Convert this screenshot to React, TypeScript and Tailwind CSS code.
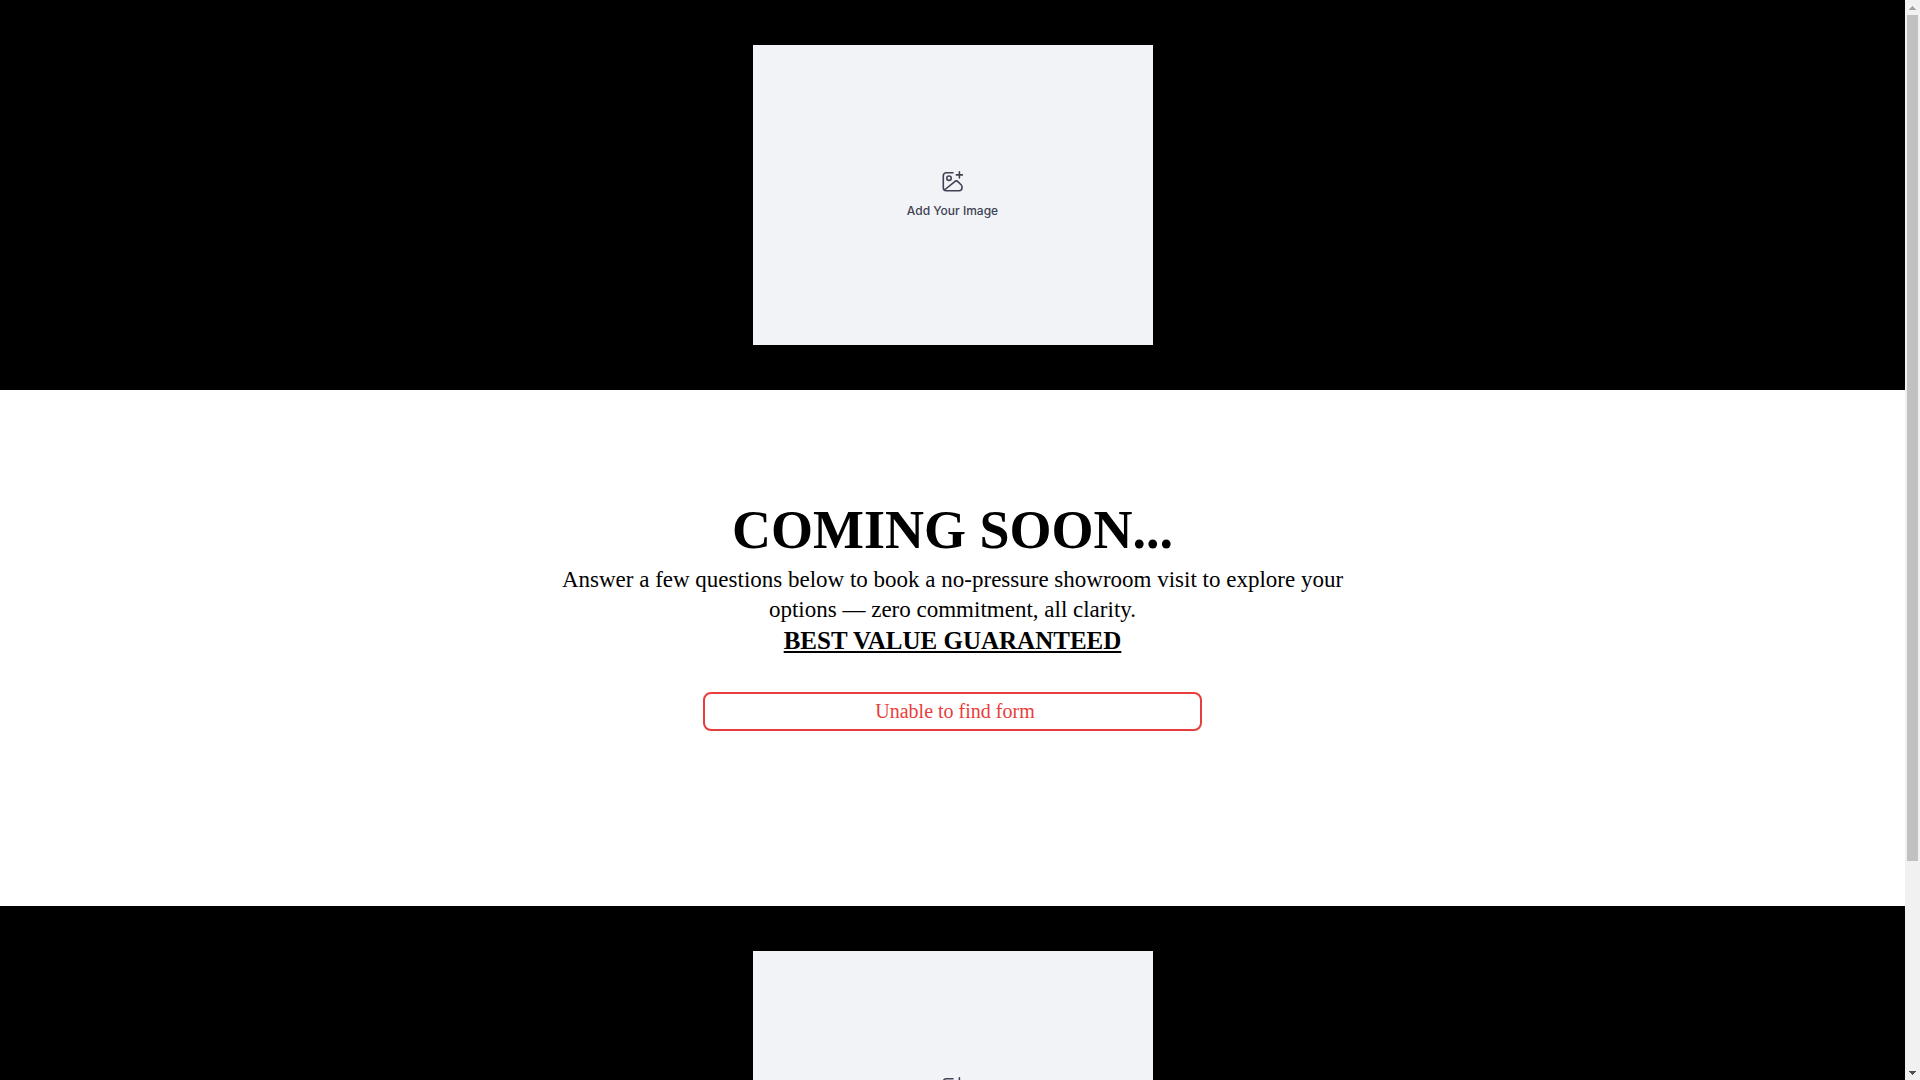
const ImagePlaceholder = () => {
  return (
    <div className="flex justify-center bg-black px-4 py-[45px]">
      <div className="flex h-[300px] w-[400px] flex-col items-center justify-center gap-2.5 bg-[#f1f3f7] pb-0.5 text-[#3f4254]">
        <svg
          width="24"
          height="24"
          viewBox="0 0 24 24"
          fill="none"
          stroke="currentColor"
          strokeWidth="1.6"
          strokeLinecap="round"
          strokeLinejoin="round"
          aria-hidden="true"
        >
          <path d="M12 3.800H5.300a3 3 0 0 0-3 3v11.900a3 3 0 0 0 3 3H18a3 3 0 0 0 3-3v-.8c0-.9-.3-1.600-.9-2.200l-3-2.900a2.600 2.600 0 0 0-3.600 0L3.400 21" />
          <circle cx="8" cy="9.200" r="2.200" />
          <path d="M18.400 2.900v6M15.400 5.900h6" />
        </svg>
        <p className="font-[Inter,sans-serif] text-[12px] leading-4 font-medium">
          Add Your Image
        </p>
      </div>
    </div>
  );
};

const ComingSoon = () => {
  return (
    <section className="flex flex-col items-center bg-white px-4 pt-[108px] pb-[175px] text-center text-black">
      <h1 className="mb-[3px] text-[54px] leading-[64px] font-bold">
        COMING SOON...
      </h1>
      <div className="max-w-[800px] text-[23px] leading-[30px]">
        <p>
          Answer a few questions below to book a no-pressure showroom visit to
          explore your options — zero commitment, all clarity.
        </p>
        <p className="text-[25px] leading-8 font-bold underline">
          BEST VALUE GUARANTEED
        </p>
      </div>
      <div
        role="alert"
        className="mt-[35px] w-full max-w-[499px] rounded-lg border-2 border-[#e93d3d] py-1 pl-[5px] text-[20px] leading-[27px] text-[#e93d3d]"
      >
        Unable to find form
      </div>
    </section>
  );
};

const Scrollbar = () => {
  return (
    <div
      className="flex w-[15px] shrink-0 flex-col items-center bg-[#f1f1f1]"
      aria-hidden="true"
    >
      <div className="flex h-[15px] shrink-0 items-center">
        <svg width="7" height="4" viewBox="0 0 7 4" fill="#a3a3a3" shapeRendering="crispEdges">
          <path d="M3 0h1v1h1v1h1v1h1v1H0V3h1V2h1V1h1z" />
        </svg>
      </div>
      <div className="flex w-full grow justify-center">
        <div className="h-[80.600%] w-[11px] bg-[#c1c1c1]" />
      </div>
      <div className="flex h-[15px] shrink-0 items-center">
        <svg width="7" height="4" viewBox="0 0 7 4" fill="#505050" shapeRendering="crispEdges">
          <path d="M0 0h7v1H6v1H5v1H4v1H3V3H2V2H1V1H0z" />
        </svg>
      </div>
    </div>
  );
};

const App = () => {
  return (
    <div className="flex h-screen overflow-hidden font-['Liberation_Serif',serif]">
      <main className="min-w-0 grow overflow-x-hidden overflow-y-auto [scrollbar-width:none]">
        <ImagePlaceholder />
        <ComingSoon />
        <ImagePlaceholder />
      </main>
      <Scrollbar />
    </div>
  );
};

export default App;
